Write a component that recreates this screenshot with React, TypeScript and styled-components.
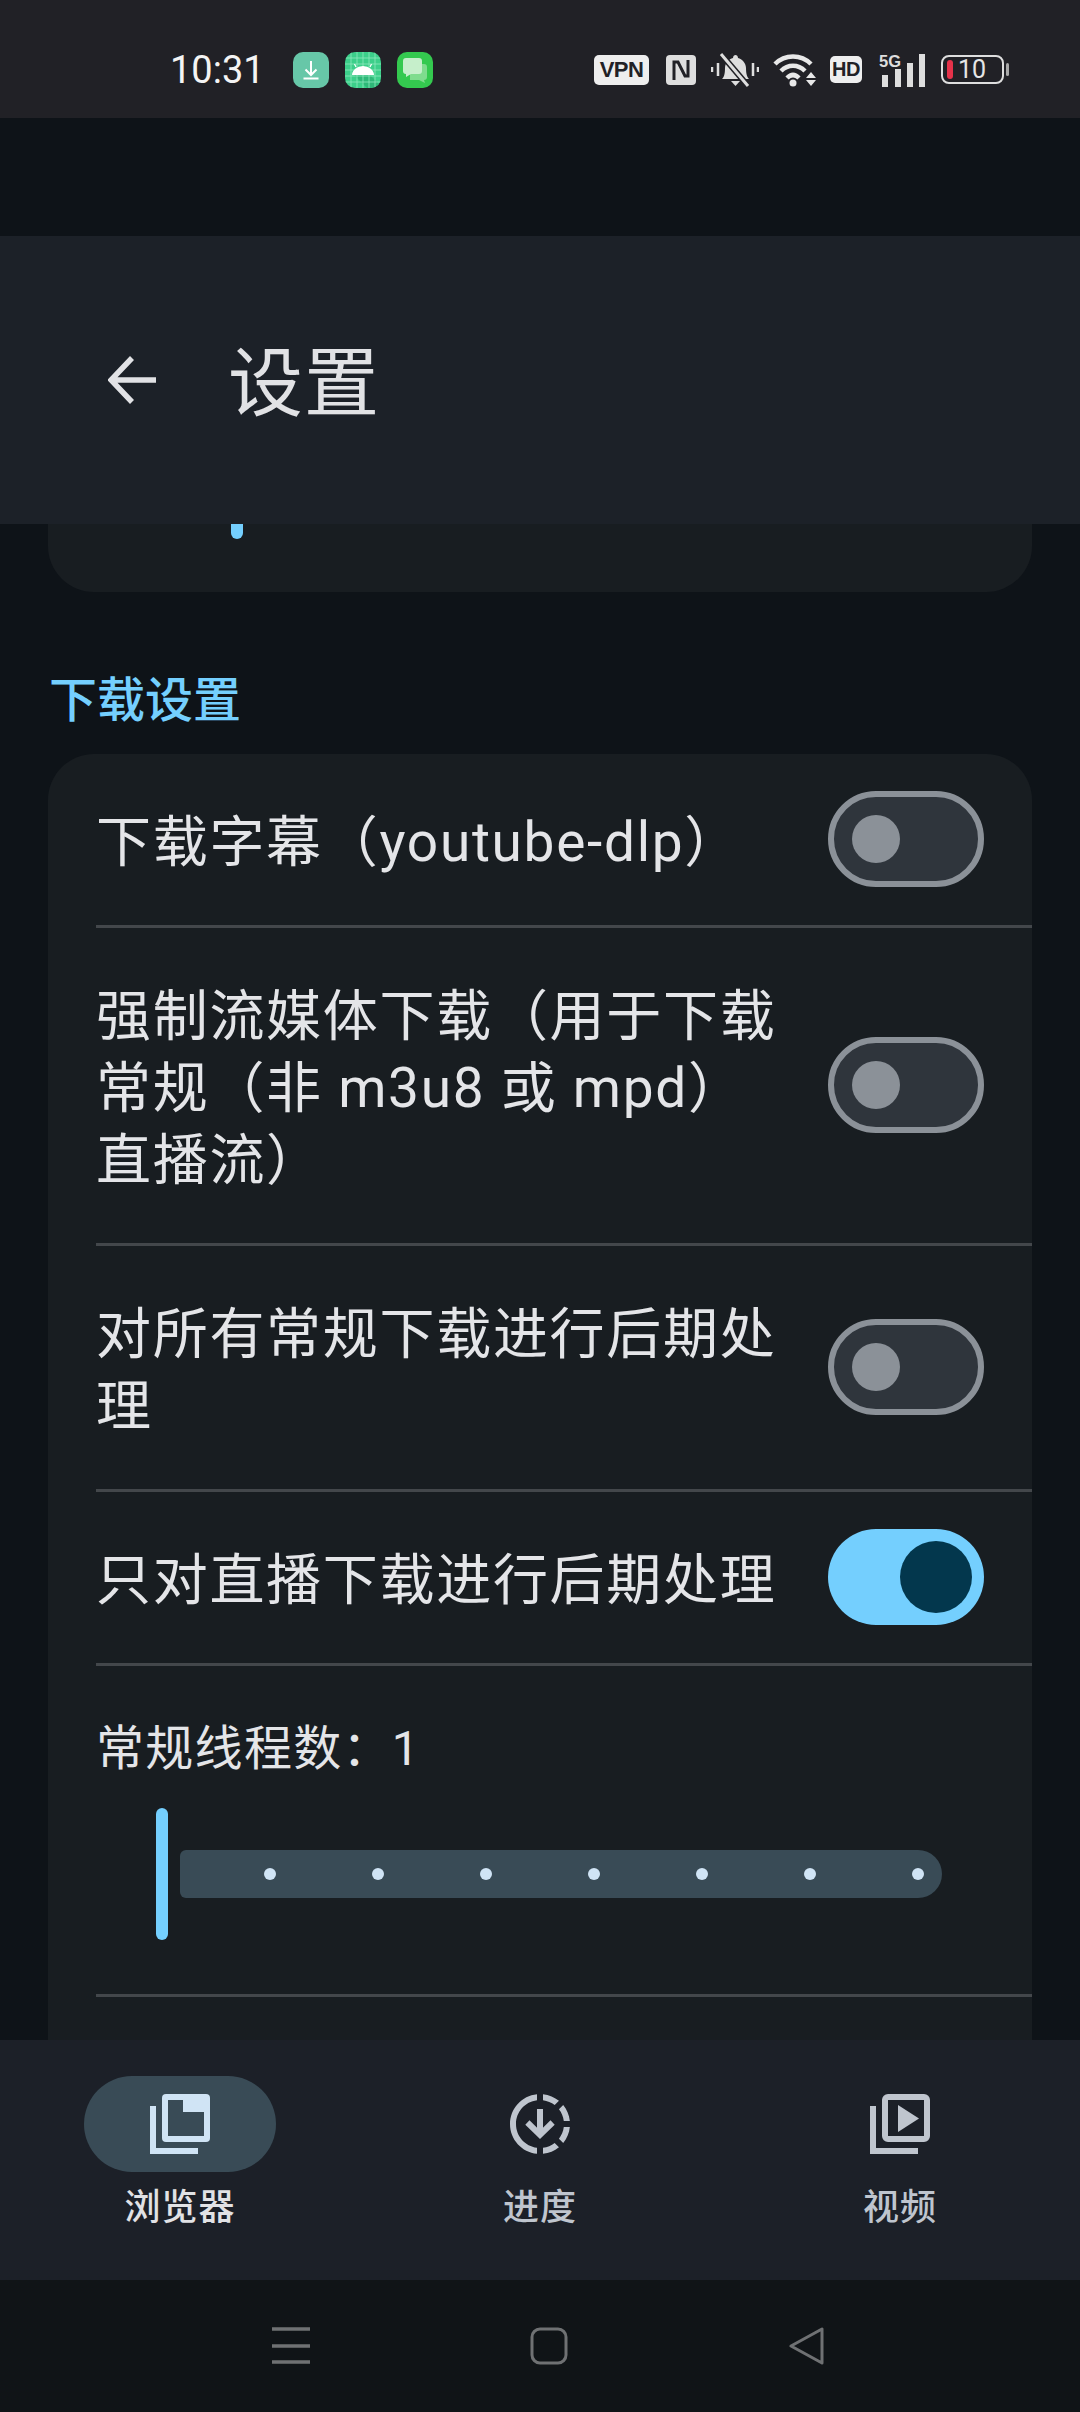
import React from "react";
import styled, { createGlobalStyle } from "styled-components";

const GlobalStyle = createGlobalStyle`
  html, body {
    margin: 0;
    padding: 0;
    background: #0e1318;
  }
  * {
    box-sizing: border-box;
  }
`;

const FONT = `Roboto, "Noto Sans CJK SC", sans-serif`;

const Screen = styled.div`
  width: 1080px;
  height: 2412px;
  display: flex;
  flex-direction: column;
  overflow: hidden;
  background: #0e1318;
  font-family: ${FONT};
`;

/* status bar */
const StatusBar = styled.div`
  height: 118px;
  flex-shrink: 0;
  background: #212126;
  display: flex;
  align-items: center;
  padding: 21px 76px 0 170px;
`;

const Clock = styled.span`
  width: 123px;
  font-size: 38px;
  line-height: 44px;
  color: #f4f4f4;
`;

const AppIcons = styled.div`
  display: flex;
  gap: 16px;
`;

const StatusIcons = styled.div`
  margin-left: auto;
  display: flex;
  align-items: center;
`;

const Badge = styled.span<{ $w: number; $h: number; $size: number; $ml: number }>`
  width: ${(p) => p.$w}px;
  height: ${(p) => p.$h}px;
  margin-left: ${(p) => p.$ml}px;
  background: #eeeeee;
  border-radius: 5px;
  color: #212126;
  font-family: "Liberation Sans", sans-serif;
  font-weight: 700;
  font-size: ${(p) => p.$size}px;
  letter-spacing: -0.5px;
  display: flex;
  align-items: center;
  justify-content: center;
`;

const StatusGlyph = styled.svg<{ $ml: number }>`
  display: block;
  margin-left: ${(p) => p.$ml}px;
  flex-shrink: 0;
`;

const Battery = styled.div`
  width: 63px;
  height: 29px;
  margin-left: 16px;
  border: 2px solid #dedede;
  border-radius: 8px;
  display: flex;
  align-items: center;
  padding-left: 4px;
  gap: 5px;
  position: relative;
  &::after {
    content: "";
    position: absolute;
    right: -7px;
    top: 6px;
    width: 3px;
    height: 13px;
    background: #a8a8a8;
    border-radius: 2px;
  }
`;

const BatteryLevel = styled.span`
  width: 6px;
  height: 19px;
  background: #e6324a;
  border-radius: 3px;
`;

const BatteryText = styled.span`
  font-size: 25px;
  line-height: 25px;
  color: #e6e6e6;
`;

const StatusGap = styled.div`
  height: 118px;
  flex-shrink: 0;
`;

/* app bar */
const TopBar = styled.div`
  height: 288px;
  flex-shrink: 0;
  background: #1c2128;
  display: flex;
  align-items: center;
  padding: 0 0 0 108px;
  z-index: 1;
`;

const BackIcon = styled.svg`
  display: block;
`;

const Title = styled.h1`
  margin: 8px 0 0 72px;
  font-size: 75px;
  line-height: 96px;
  font-weight: 400;
  letter-spacing: 1px;
  color: #e1e2e5;
`;

/* scrollable settings */
const Content = styled.div`
  flex: 1;
  min-height: 0;
  overflow: hidden;
  padding: 0 48px;
  display: flex;
  flex-direction: column;
`;

const PrevCard = styled.div`
  height: 68px;
  flex-shrink: 0;
  background: #181d21;
  border-radius: 0 0 46px 46px;
  padding-left: 183px;
`;

const PrevThumb = styled.div`
  width: 12px;
  height: 15px;
  background: #74cffe;
  border-radius: 0 0 6px 6px;
`;

const SectionTitle = styled.h2`
  margin: 77px 0 21px 1px;
  font-size: 48px;
  line-height: 64px;
  font-weight: 500;
  color: #74cffe;
`;

const Card = styled.div`
  flex: 1;
  background: #181d21;
  border-radius: 46px 46px 0 0;
  padding-left: 48px;
`;

const Row = styled.div`
  display: flex;
  align-items: center;
  justify-content: space-between;
  padding: 49px 48px 50px 0;
  border-bottom: 3px solid #43474b;
`;

const RowText = styled.div`
  width: 700px;
  margin: 3px 0 -3px;
  font-size: 55px;
  line-height: 72px;
  letter-spacing: 1.7px;
  color: #e4e5e8;
`;

const Switch = styled.div<{ $on?: boolean }>`
  width: 156px;
  height: 96px;
  margin: -12px 0;
  flex-shrink: 0;
  border-radius: 48px;
  border: ${(p) => (p.$on ? "0" : "6px solid #8b9198")};
  background: ${(p) => (p.$on ? "#74cffe" : "#2f353c")};
  display: flex;
  align-items: center;
  justify-content: ${(p) => (p.$on ? "flex-end" : "flex-start")};
  padding: ${(p) => (p.$on ? "0 12px" : "0 18px")};
`;

const SwitchKnob = styled.div<{ $on?: boolean }>`
  width: ${(p) => (p.$on ? 72 : 48)}px;
  height: ${(p) => (p.$on ? 72 : 48)}px;
  border-radius: 50%;
  background: ${(p) => (p.$on ? "#03374d" : "#8b9198")};
`;

const SliderRow = styled.div`
  padding: 48px 0 54px 0;
  border-bottom: 3px solid #43474b;
`;

const SliderLabel = styled.div`
  font-size: 48px;
  line-height: 70px;
  letter-spacing: 1.3px;
  color: #e4e5e8;
`;

const Slider = styled.div`
  margin: 24px 0 0 60px;
  height: 132px;
  display: flex;
  align-items: center;
  gap: 12px;
`;

const SliderThumb = styled.div`
  width: 12px;
  height: 132px;
  border-radius: 6px;
  background: #74cffe;
`;

const SliderTrack = styled.div`
  width: 762px;
  height: 48px;
  background: #394b56;
  border-radius: 6px 24px 24px 6px;
  display: flex;
  align-items: center;
  padding-left: 84px;
  gap: 96px;
`;

const SliderDot = styled.span`
  width: 12px;
  height: 12px;
  border-radius: 50%;
  background: #d0e4f5;
`;

/* bottom navigation */
const BottomNav = styled.nav`
  height: 240px;
  flex-shrink: 0;
  background: #1c2028;
  display: grid;
  grid-template-columns: repeat(3, 360px);
`;

const NavItem = styled.div`
  display: flex;
  flex-direction: column;
  align-items: center;
  padding-top: 36px;
`;

const NavPill = styled.div<{ $active?: boolean }>`
  width: 192px;
  height: 96px;
  border-radius: 48px;
  background: ${(p) => (p.$active ? "#394b56" : "transparent")};
  display: flex;
  align-items: center;
  justify-content: center;
`;

const NavLabel = styled.span<{ $active?: boolean }>`
  margin-top: 12px;
  font-size: 36px;
  line-height: 48px;
  font-weight: 500;
  letter-spacing: 1px;
  color: ${(p) => (p.$active ? "#e1e2e5" : "#bfc5ce")};
`;

const SystemNav = styled.div`
  height: 132px;
  flex-shrink: 0;
  background: #101417;
  display: flex;
  align-items: center;
  justify-content: space-between;
  padding: 0 254px 0 272px;
`;

const DownloadTile = () => (
  <svg width="36" height="36" viewBox="0 0 36 36">
    <rect width="36" height="36" rx="10" fill="#67c7a8" />
    <path d="M18 9v14M12.5 17.5 18 23l5.500-5.500M10.500 26.500h15" stroke="#fff" strokeWidth="2" fill="none" />
  </svg>
);

const AndroidTile = () => (
  <svg width="36" height="36" viewBox="0 0 36 36">
    <defs>
      <clipPath id="tile">
        <rect width="36" height="36" rx="10" />
      </clipPath>
    </defs>
    <g clipPath="url(#tile)">
      <rect width="36" height="36" fill="#3ccf8a" />
      <path d="M8 22 24 22 36 34V36H22Z" fill="#2eb878" />
      <path d="M6 0v36M12 0v36M18 0v36M24 0v36M30 0v36M0 6h36M0 12h36M0 18h36M0 24h36M0 30h36" stroke="#8de8bd" strokeWidth="0.8" />
      <path d="M7 23a11 9 0 0 1 22 0Z" fill="#fff" />
      <path d="M11 15 9.500 12M25 15l1.500-3" stroke="#fff" strokeWidth="1.200" />
    </g>
  </svg>
);

const MessageTile = () => (
  <svg width="36" height="36" viewBox="0 0 36 36">
    <rect width="36" height="36" rx="10" fill="#34c94f" />
    <path d="M13 12h14a3 3 0 0 1 3 3v10a3 3 0 0 1-3 3l1 3-6-3h-9Z" fill="#7fdc8e" />
    <path d="M9 6h13a3 3 0 0 1 3 3v10a3 3 0 0 1-3 3H14l-5 3v-3a3 3 0 0 1-3-3V9a3 3 0 0 1 3-3Z" fill="#c6efcb" />
  </svg>
);

const NfcIcon = () => (
  <StatusGlyph $ml={17} width="30" height="30" viewBox="0 0 30 30">
    <rect width="30" height="30" rx="4" fill="#dedede" />
    <path d="M8 25V7h4l7 14h3V5" stroke="#212126" strokeWidth="3" fill="none" />
  </StatusGlyph>
);

const MutedBell = () => (
  <StatusGlyph $ml={15} width="48" height="34" viewBox="0 0 48 34">
    <path d="M11 26c2-2 3-5 3-11 0-5 4-9 8-10 0-4 5-4 5 0 4 1 8 5 8 10 0 6 1 9 3 11Z" fill="#dedede" />
    <path d="M20 28h9l-4.500 5Z" fill="#dedede" />
    <path d="M10 1 37 33" stroke="#212126" strokeWidth="6" />
    <path d="M10 1 37 33" stroke="#dedede" strokeWidth="3" />
    <path d="M1 14v5M7 10v13M42 10v13M47 14v5" stroke="#dedede" strokeWidth="2.500" />
  </StatusGlyph>
);

const WifiIcon = () => (
  <StatusGlyph $ml={14} width="44" height="34" viewBox="0 0 44 34">
    <path d="M2 11C12 1 28 1 38 11" stroke="#e8e8e8" strokeWidth="4.500" fill="none" />
    <path d="M8 18C15 11 25 11 32 18" stroke="#e8e8e8" strokeWidth="4.500" fill="none" />
    <path d="M14 25c4-4 8-4 12 0" stroke="#e8e8e8" strokeWidth="4.500" fill="none" />
    <circle cx="20" cy="30" r="3.500" fill="#e8e8e8" />
    <path d="M38 19l5 6H33ZM33 27h10l-5 6Z" fill="#e8e8e8" />
  </StatusGlyph>
);

const SignalIcon = () => (
  <StatusGlyph $ml={17} width="46" height="34" viewBox="0 0 46 34">
    <text x="0" y="14" fontFamily="'Liberation Sans', sans-serif" fontWeight="700" fontSize="17" fill="#dedede" textLength="22" lengthAdjust="spacingAndGlyphs">5G</text>
    <rect x="3" y="22" width="6" height="12" fill="#dedede" />
    <rect x="16" y="16" width="6" height="18" fill="#dedede" />
    <rect x="28" y="10" width="6" height="24" fill="#dedede" />
    <rect x="40" y="1" width="6" height="33" fill="#dedede" />
  </StatusGlyph>
);

const BrowserIcon = () => (
  <svg width="60" height="60" viewBox="0 0 60 60">
    <path d="M3 12v45h45" stroke="#d0e4f5" strokeWidth="6" fill="none" />
    <rect x="12" width="48" height="48" rx="4" fill="#d0e4f5" />
    <path d="M18 6h15v12h21v24H18Z" fill="#394b56" />
  </svg>
);

const ProgressIcon = () => (
  <svg width="60" height="60" viewBox="2 2 20 20">
    <path
      fill="#bfc5ce"
      d="M18.320 4.260C16.840 3.050 15.010 2.250 13 2.050v2.020c1.460.18 2.790.76 3.900 1.620L18.320 4.260zM19.930 11h2.020c-.2-2.010-1-3.840-2.210-5.320L18.310 7.100C19.170 8.210 19.750 9.540 19.930 11zM18.310 16.900l1.430 1.430c1.210-1.480 2.010-3.320 2.210-5.320h-2.020C19.750 14.460 19.170 15.790 18.310 16.900zM13 19.930v2.020c2.010-.2 3.840-1 5.320-2.210l-1.430-1.430C15.790 19.170 14.460 19.750 13 19.930zM11 19.930v2.020c-5.050-.5-9-4.760-9-9.950s3.950-9.450 9-9.950v2.020C7.050 4.560 4 7.920 4 12S7.050 19.440 11 19.930z"
    />
    <path d="M12 7v8M7.800 11.500 12 15.600l4.200-4.100" stroke="#bfc5ce" strokeWidth="2" fill="none" />
  </svg>
);

const VideoIcon = () => (
  <svg width="60" height="60" viewBox="0 0 60 60">
    <path d="M3 12v45h45" stroke="#bfc5ce" strokeWidth="6" fill="none" />
    <rect x="15" y="3" width="42" height="42" rx="3" stroke="#bfc5ce" strokeWidth="6" fill="none" />
    <path d="M28 11v27l21-13.500Z" fill="#bfc5ce" />
  </svg>
);

export default function App() {
  return (
    <Screen>
      <GlobalStyle />
      <StatusBar>
        <Clock>10:31</Clock>
        <AppIcons>
          <DownloadTile />
          <AndroidTile />
          <MessageTile />
        </AppIcons>
        <StatusIcons>
          <Badge $w={55} $h={30} $size={22} $ml={0}>VPN</Badge>
          <NfcIcon />
          <MutedBell />
          <WifiIcon />
          <Badge $w={32} $h={27} $size={20} $ml={13}>HD</Badge>
          <SignalIcon />
          <Battery>
            <BatteryLevel />
            <BatteryText>10</BatteryText>
          </Battery>
        </StatusIcons>
      </StatusBar>
      <StatusGap />
      <TopBar>
        <BackIcon width="48" height="48" viewBox="0 0 48 48">
          <path d="M48 24H4M24 2 3 24l21 22" stroke="#e1e2e5" strokeWidth="5.500" fill="none" />
        </BackIcon>
        <Title>设置</Title>
      </TopBar>
      <Content>
        <PrevCard>
          <PrevThumb />
        </PrevCard>
        <SectionTitle>下载设置</SectionTitle>
        <Card>
          <Row>
            <RowText>下载字幕（youtube-dlp）</RowText>
            <Switch><SwitchKnob /></Switch>
          </Row>
          <Row>
            <RowText>强制流媒体下载（用于下载常规（非 m3u8 或 mpd）直播流）</RowText>
            <Switch><SwitchKnob /></Switch>
          </Row>
          <Row>
            <RowText>对所有常规下载进行后期处理</RowText>
            <Switch><SwitchKnob /></Switch>
          </Row>
          <Row>
            <RowText>只对直播下载进行后期处理</RowText>
            <Switch $on><SwitchKnob $on /></Switch>
          </Row>
          <SliderRow>
            <SliderLabel>常规线程数：1</SliderLabel>
            <Slider>
              <SliderThumb />
              <SliderTrack>
                {[0, 1, 2, 3, 4, 5, 6].map((i) => (
                  <SliderDot key={i} />
                ))}
              </SliderTrack>
            </Slider>
          </SliderRow>
        </Card>
      </Content>
      <BottomNav>
        <NavItem>
          <NavPill $active><BrowserIcon /></NavPill>
          <NavLabel $active>浏览器</NavLabel>
        </NavItem>
        <NavItem>
          <NavPill><ProgressIcon /></NavPill>
          <NavLabel>进度</NavLabel>
        </NavItem>
        <NavItem>
          <NavPill><VideoIcon /></NavPill>
          <NavLabel>视频</NavLabel>
        </NavItem>
      </BottomNav>
      <SystemNav>
        <svg width="38" height="38" viewBox="0 0 38 38">
          <path d="M0 2h38M0 19h38M0 35h38" stroke="#6f7173" strokeWidth="3.500" />
        </svg>
        <svg width="38" height="38" viewBox="0 0 38 38">
          <rect x="2" y="2" width="34" height="34" rx="8" stroke="#6f7173" strokeWidth="3" fill="none" />
        </svg>
        <svg width="38" height="38" viewBox="0 0 38 38">
          <path d="M3 19 34 2v34Z" stroke="#6f7173" strokeWidth="3" strokeLinejoin="round" fill="none" />
        </svg>
      </SystemNav>
    </Screen>
  );
}
